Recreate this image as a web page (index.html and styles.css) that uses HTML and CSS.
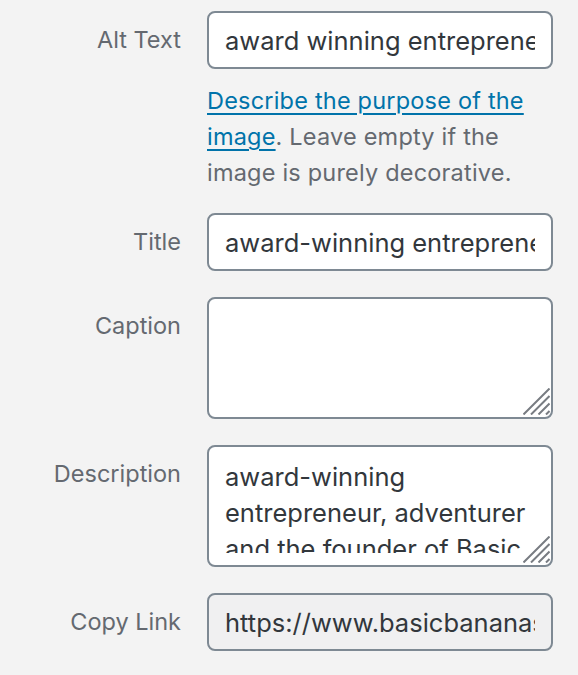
FILE: index.html
```html
<!DOCTYPE html>
<html lang="en">
<head>
<meta charset="utf-8">
<title>Attachment details</title>
<link rel="stylesheet" href="styles.css">
</head>
<body>
<form class="panel">
  <div class="setting has-help">
    <label class="name" for="alt-text">Alt Text</label>
    <div class="field">
      <input class="text-input" id="alt-text" type="text" value="award winning entrepreneur, adventurer and the founder of Basic Bananas">
      <p class="description"><a href="#">Describe the purpose of the image</a>. Leave empty if the image is purely decorative.</p>
    </div>
  </div>
  <div class="setting">
    <label class="name" for="title">Title</label>
    <div class="field">
      <input class="text-input" id="title" type="text" value="award-winning entrepreneur, adventurer and the founder of Basic Bananas">
    </div>
  </div>
  <div class="setting">
    <label class="name" for="caption">Caption</label>
    <div class="field">
      <div class="textbox">
        <textarea id="caption"></textarea>
        <svg class="resizer" width="27" height="27" viewBox="0 0 27 27" aria-hidden="true">
          <path d="M0.5 26.5 L26.5 0.5 M8 26.5 L26.5 8 M15.5 26.5 L26.5 15.5 M23 26.5 L26.5 23" />
        </svg>
      </div>
    </div>
  </div>
  <div class="setting">
    <label class="name" for="description">Description</label>
    <div class="field">
      <div class="textbox">
        <textarea id="description">award-winning entrepreneur, adventurer and the founder of Basic Bananas</textarea>
        <svg class="resizer" width="27" height="27" viewBox="0 0 27 27" aria-hidden="true">
          <path d="M0.5 26.5 L26.5 0.5 M8 26.5 L26.5 8 M15.5 26.5 L26.5 15.5 M23 26.5 L26.5 23" />
        </svg>
      </div>
    </div>
  </div>
  <div class="setting">
    <label class="name" for="copy-link">Copy Link</label>
    <div class="field">
      <input class="text-input readonly" id="copy-link" type="text" readonly value="https://www.basicbananas.com/wp-content/uploads/2019/08/award-winning-entrepreneur.jpg">
    </div>
  </div>
</form>
</body>
</html>
```
FILE: styles.css
```css
html, body {
  margin: 0;
  padding: 0;
  background: #f3f3f3;
}

body {
  font-family: Inter, "Liberation Sans", sans-serif;
  color: #32373c;
}

.panel {
  display: flex;
  flex-direction: column;
  padding: 11px 25px 0 0;
}

.setting {
  display: grid;
  grid-template-columns: 181px 346px;
  column-gap: 26px;
  align-items: start;
  margin-bottom: 26px;
}

.setting.has-help {
  margin-bottom: 22px;
}

.name {
  text-align: right;
  font-size: 23.5px;
  line-height: 58px;
  color: #646970;
  white-space: nowrap;
}

.field {
  display: flex;
  flex-direction: column;
}

.text-input {
  box-sizing: border-box;
  width: 100%;
  height: 58px;
  margin: 0;
  padding: 0 16px;
  border: 2px solid #7e8993;
  border-radius: 8px;
  background: #fff;
  font-family: inherit;
  font-size: 25.5px;
  color: #32373c;
  outline: none;
}

.text-input.readonly {
  background: #f0f0f1;
}

.description {
  margin: 14px 0 0;
  font-size: 23.5px;
  line-height: 36px;
  color: #646970;
  letter-spacing: 0.2px;
}

.description a {
  color: #0073aa;
  text-decoration: underline;
  text-decoration-thickness: 2px;
  text-underline-offset: 4px;
}

.textbox {
  position: relative;
  box-sizing: border-box;
  height: 122px;
  padding-bottom: 12px;
  border: 2px solid #7e8993;
  border-radius: 8px;
  background: #fff;
}

.textbox textarea {
  display: block;
  box-sizing: border-box;
  width: 100%;
  height: 100%;
  margin: 0;
  padding: 12px 16px 0;
  border: 0;
  background: transparent;
  font-family: inherit;
  font-size: 25.5px;
  line-height: 36px;
  color: #32373c;
  resize: none;
  overflow: hidden;
  outline: none;
}

.resizer {
  position: absolute;
  right: 1px;
  bottom: 2px;
  fill: none;
  stroke: #787c82;
  stroke-width: 2;
}
```
